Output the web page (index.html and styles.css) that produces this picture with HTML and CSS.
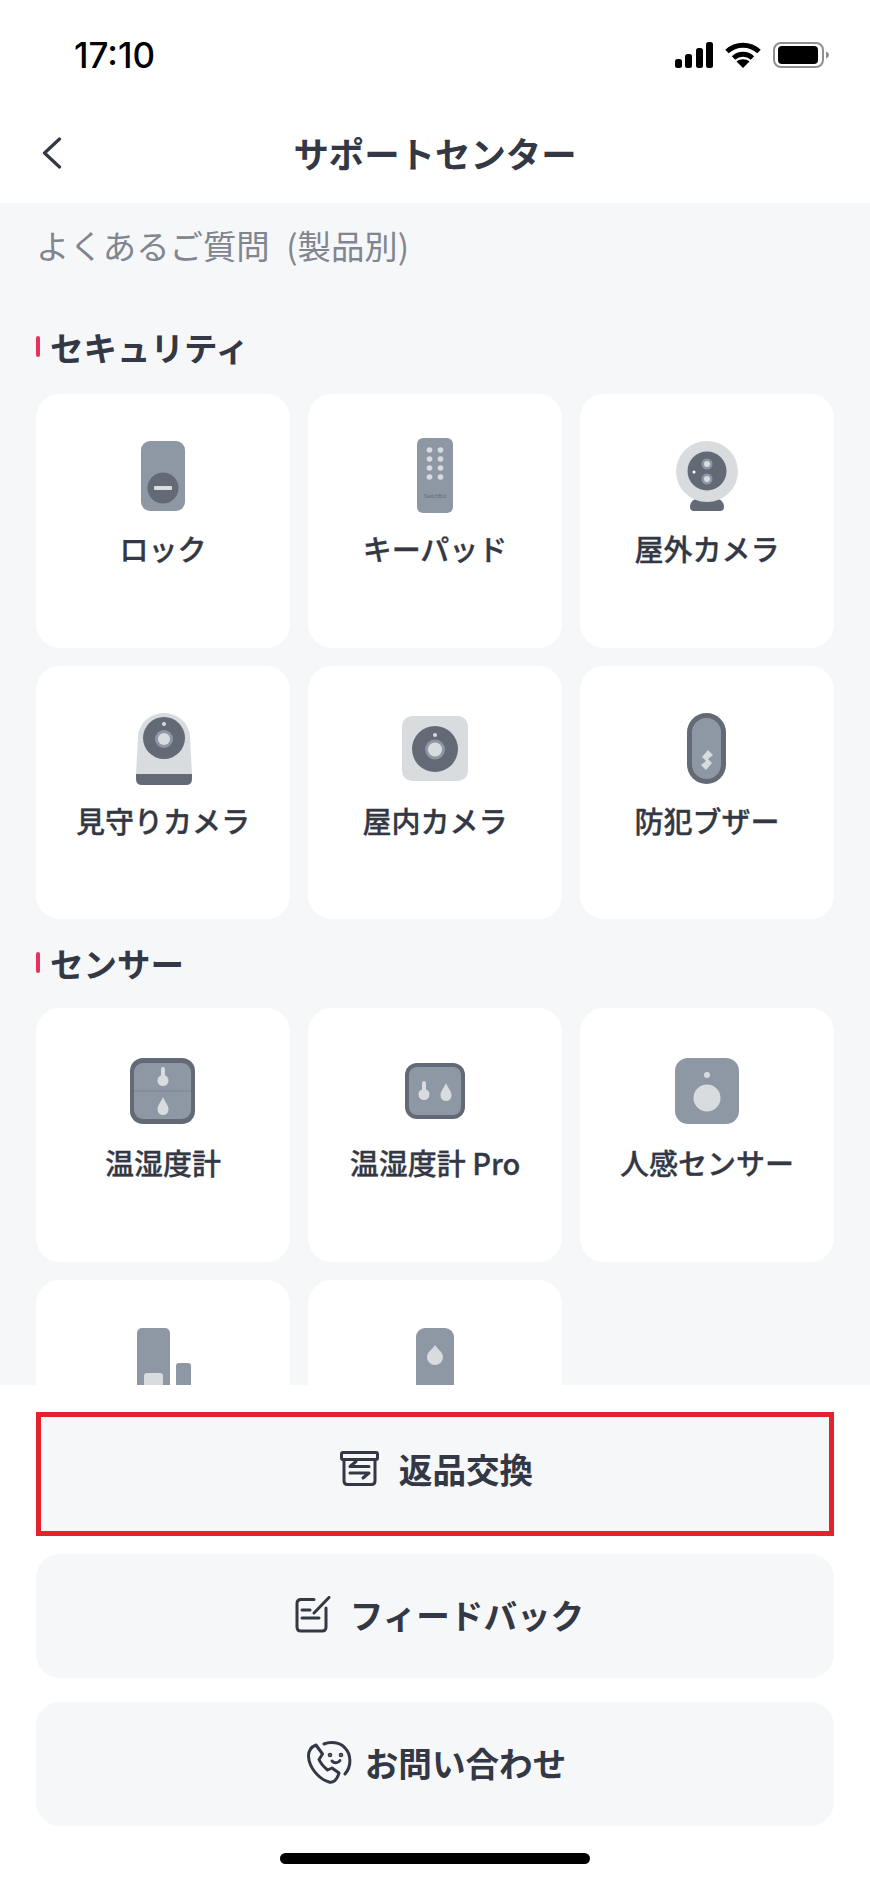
FILE: index.html
```html
<!DOCTYPE html>
<html lang="ja">

<head>
    <meta charset="UTF-8">
    <meta name="viewport" content="width=device-width, initial-scale=1.0">
    <title>サポートセンター</title>
    <link rel="stylesheet" href="styles.css">
</head>

<body>
    <div class="status-bar">
        <span class="time">17:10</span>
        <div class="status-icons">
            <svg width="38" height="26" viewBox="0 0 38 26" fill="#000">
                <rect x="0" y="17" width="7" height="9" rx="2.5"/>
                <rect x="10" y="12" width="7" height="14" rx="2.5"/>
                <rect x="21" y="6" width="7" height="20" rx="2.5"/>
                <rect x="31" y="0" width="7" height="26" rx="2.5"/>
            </svg>
            <svg width="36" height="26" viewBox="0 0 36 26" fill="none" stroke="#000" stroke-width="5">
                <path d="M2 9.5C11 1 25 1 34 9.5"/>
                <path d="M8.5 16C14 11 22 11 27.5 16"/>
                <path d="M18 26L11.5 19.5C15 16.5 21 16.5 24.5 19.5Z" fill="#000" stroke="none"/>
            </svg>
            <svg width="57" height="26" viewBox="0 0 57 26">
                <rect x="1" y="1" width="49" height="24" rx="7" fill="none" stroke="#8f8f8f" stroke-width="2"/>
                <rect x="5" y="4" width="40" height="18" rx="4" fill="#000"/>
                <path d="M53 9.5C55 10.5 56 11.5 56 13C56 14.5 55 15.5 53 16.5Z" fill="#8f8f8f"/>
            </svg>
        </div>
    </div>

    <header class="header">
        <svg class="back" width="20" height="32" viewBox="0 0 20 32" fill="none" stroke="#333844" stroke-width="3.2" stroke-linecap="round" stroke-linejoin="round">
            <path d="M17.5 2L2.5 16L17.5 30"/>
        </svg>
        <h1 class="title">サポートセンター</h1>
    </header>

    <main class="content">
        <p class="lead">よくあるご質問 (製品別)</p>

        <h2 class="section-title">セキュリティ</h2>
        <div class="grid">
            <div class="card">
                <svg class="card-icon" viewBox="0 0 80 80">
                    <rect x="18" y="4" width="44" height="70" rx="9" fill="#8e98a5"/>
                    <circle cx="40" cy="51" r="15.5" fill="#636a76"/>
                    <rect x="31" y="49" width="18" height="4" rx="1" fill="#d9dcdf"/>
                </svg>
                <span class="card-label">ロック</span>
            </div>
            <div class="card">
                <svg class="card-icon" viewBox="0 0 80 80">
                    <rect x="22" y="1" width="36" height="75" rx="6" fill="#8e98a5"/>
                    <g fill="#d9dcdf">
                        <circle cx="34.5" cy="13" r="2.8"/><circle cx="45.5" cy="13" r="2.8"/>
                        <circle cx="34.5" cy="22" r="2.8"/><circle cx="45.5" cy="22" r="2.8"/>
                        <circle cx="34.5" cy="31" r="2.8"/><circle cx="45.5" cy="31" r="2.8"/>
                        <circle cx="34.5" cy="40" r="2.8"/><circle cx="45.5" cy="40" r="2.8"/>
                    </g>
                    <text class="brand" x="40" y="61">SwitchBot</text>
                </svg>
                <span class="card-label">キーパッド</span>
            </div>
            <div class="card">
                <svg class="card-icon" viewBox="0 0 80 80">
                    <path d="M23 70C23 66 25 64 28 62H52C55 64 57 66 57 70Q57 74 53 74H27Q23 74 23 70Z" fill="#636a76"/>
                    <ellipse cx="40" cy="34.5" rx="31" ry="30.5" fill="#d9dcdf"/>
                    <circle cx="40" cy="34" r="19.5" fill="#636a76"/>
                    <circle cx="40" cy="27" r="5.5" fill="#8e98a5"/>
                    <circle cx="40" cy="27" r="3" fill="#d9dcdf"/>
                    <circle cx="40" cy="42" r="5.5" fill="#8e98a5"/>
                    <circle cx="40" cy="42" r="3" fill="#d9dcdf"/>
                    <circle cx="27" cy="35" r="1.5" fill="#fff"/>
                </svg>
                <span class="card-label">屋外カメラ</span>
            </div>
            <div class="card">
                <svg class="card-icon" viewBox="0 0 80 80">
                    <path d="M13 65L15 28C16 13 28 4 41 4C54 4 66 13 67 28L69 65Z" fill="#d9dcdf"/>
                    <path d="M13 65H69V70Q69 76 63 76H19Q13 76 13 70Z" fill="#636a76"/>
                    <circle cx="41" cy="29" r="21" fill="#636a76"/>
                    <circle cx="41" cy="30" r="9" fill="#8e98a5"/>
                    <circle cx="41" cy="30" r="6" fill="#d9dcdf"/>
                    <circle cx="41" cy="15" r="2" fill="#d9dcdf"/>
                </svg>
                <span class="card-label">見守りカメラ</span>
            </div>
            <div class="card">
                <svg class="card-icon" viewBox="0 0 80 80">
                    <rect x="7" y="7" width="66" height="65" rx="10" fill="#d9dcdf"/>
                    <circle cx="40" cy="40" r="23" fill="#636a76"/>
                    <circle cx="40" cy="40.5" r="10" fill="#8e98a5"/>
                    <circle cx="40" cy="40.5" r="7" fill="#d9dcdf"/>
                    <circle cx="40" cy="26" r="2" fill="#d9dcdf"/>
                </svg>
                <span class="card-label">屋内カメラ</span>
            </div>
            <div class="card">
                <svg class="card-icon" viewBox="0 0 80 80">
                    <rect x="20" y="4" width="39" height="71" rx="19.5" fill="#636a76"/>
                    <rect x="25" y="9" width="29" height="61" rx="14.5" fill="#8e98a5"/>
                    <path d="M41 41L46 46L41 50L45 54L39 61L34 56L39 52L35 48Z" fill="#d9dcdf"/>
                </svg>
                <span class="card-label">防犯ブザー</span>
            </div>
        </div>

        <h2 class="section-title">センサー</h2>
        <div class="grid">
            <div class="card">
                <svg class="card-icon" viewBox="0 0 80 80">
                    <rect x="7" y="7" width="65" height="66" rx="13" fill="#636a76"/>
                    <rect x="11" y="12" width="57" height="56" rx="9" fill="#8e98a5"/>
                    <rect x="11" y="39.5" width="57" height="1" fill="#7a8390"/>
                    <rect x="38" y="16" width="4" height="14" rx="2" fill="#d9dcdf"/>
                    <circle cx="40" cy="29.5" r="5.5" fill="#d9dcdf"/>
                    <path d="M40 46C42 51 45.5 54 45.5 58.5A5.5 5.5 0 0 1 34.5 58.5C34.5 54 38 51 40 46Z" fill="#d9dcdf"/>
                </svg>
                <span class="card-label">温湿度計</span>
            </div>
            <div class="card">
                <svg class="card-icon" viewBox="0 0 80 80">
                    <rect x="10" y="12" width="60" height="56" rx="12" fill="#636a76"/>
                    <rect x="14" y="16" width="52" height="48" rx="8" fill="#8e98a5"/>
                    <rect x="27" y="30" width="4" height="14" rx="2" fill="#d9dcdf"/>
                    <circle cx="29" cy="43.5" r="5.5" fill="#d9dcdf"/>
                    <path d="M51 32C53 37 56.5 40 56.5 44.5A5.5 5.5 0 0 1 45.5 44.5C45.5 40 49 37 51 32Z" fill="#d9dcdf"/>
                </svg>
                <span class="card-label">温湿度計 Pro</span>
            </div>
            <div class="card">
                <svg class="card-icon" viewBox="0 0 80 80">
                    <rect x="8" y="7" width="64" height="66" rx="13" fill="#8e98a5"/>
                    <circle cx="40" cy="24" r="3" fill="#d9dcdf"/>
                    <circle cx="40" cy="47" r="13.5" fill="#d9dcdf"/>
                </svg>
                <span class="card-label">人感センサー</span>
            </div>
            <div class="card">
                <svg class="card-icon" viewBox="0 0 80 80">
                    <rect x="14" y="5" width="33" height="70" rx="5" fill="#8e98a5"/>
                    <rect x="21" y="50" width="19" height="18" rx="3" fill="#d9dcdf"/>
                    <rect x="53" y="40" width="15" height="35" rx="3" fill="#8e98a5"/>
                </svg>
            </div>
            <div class="card">
                <svg class="card-icon" viewBox="0 0 80 80">
                    <rect x="21" y="5" width="38" height="70" rx="9" fill="#8e98a5"/>
                    <path d="M40 22C43 27 48 29 48 34A8 8 0 0 1 32 34C32 29 37 27 40 22Z" fill="#d9dcdf"/>
                </svg>
            </div>
        </div>
    </main>

    <div class="actions">
        <button class="action action-returns">
            <svg width="39" height="35" viewBox="0 0 39 35" fill="none" stroke="#333844" stroke-width="3" stroke-linecap="round" stroke-linejoin="round">
                <rect x="1.5" y="1.5" width="36" height="7" rx="1.5"/>
                <path d="M4 8.5V30Q4 33.5 7.5 33.5H31.5Q35 33.5 35 30V8.5"/>
                <path d="M16 10.5L10 15.5H29"/>
                <path d="M10 22H29L23 27"/>
            </svg>
            返品交換
        </button>
        <button class="action action-feedback">
            <svg width="36" height="37" viewBox="0 0 36 37" fill="none" stroke="#333844" stroke-width="3" stroke-linecap="round" stroke-linejoin="round">
                <path d="M19 3.5H6Q2 3.5 2 7.5V31Q2 35 6 35H27Q31 35 31 31V12"/>
                <path d="M19 17L34 1.5"/>
                <path d="M7 14H15"/>
                <path d="M7 22H24"/>
            </svg>
            フィードバック
        </button>
        <button class="action action-contact">
            <svg width="46" height="43" viewBox="0 0 46 43" fill="none" stroke="#333844" stroke-width="3" stroke-linecap="round" stroke-linejoin="round">
                <path d="M9 4C4 6 1.5 10 1.5 15C2 27 12 38 22 41C26 42 30 39 32 32L25 27L20.5 29C17 26 14 23 12 18.5L15.5 13Z"/>
                <path d="M17 3C23 0.5 33 1 38 7C44 13 45 25 38 33"/>
                <path d="M25 20C27 22.5 31 22.5 33 19.5"/>
                <circle cx="23" cy="14" r="0.8" fill="#333844"/>
                <circle cx="34" cy="14" r="0.8" fill="#333844"/>
            </svg>
            お問い合わせ
        </button>
        <div class="home-indicator"></div>
    </div>
</body>

</html>
```

FILE: styles.css
```css
/* General Reset */
* {
    margin: 0;
    padding: 0;
    box-sizing: border-box;
}

body {
    font-family: "Noto Sans CJK JP", "Noto Sans", sans-serif;
    display: flex;
    flex-direction: column;
    height: 1882px;
    overflow: hidden;
    background: #fff;
    color: #333844;
}

.status-bar {
    height: 110px;
    padding: 0 40px 0 74px;
    display: flex;
    justify-content: space-between;
    align-items: center;
    flex-shrink: 0;
}

.time {
    font-family: Inter, sans-serif;
    font-size: 35px;
    font-weight: 500;
    color: #000;
}

.status-icons {
    display: flex;
    align-items: center;
    gap: 12px;
}

.header {
    height: 93px;
    padding: 0 42px 7px;
    display: grid;
    grid-template-columns: 1fr auto 1fr;
    align-items: center;
    flex-shrink: 0;
}

.title {
    font-size: 35.4px;
    font-weight: 700;
    line-height: 44px;
}

.content {
    flex: 1;
    min-height: 0;
    overflow: hidden;
    background: #f6f7f9;
    padding: 20px 36px 0;
}

.lead {
    font-size: 33.4px;
    line-height: 44px;
    word-spacing: 9px;
    color: #80858f;
    margin-bottom: 60px;
}

.section-title {
    font-size: 33.5px;
    font-weight: 700;
    line-height: 40px;
    margin: 24px 0 25px;
    padding-left: 14px;
    position: relative;
}

.lead + .section-title {
    margin-bottom: 27px;
}

.section-title::before {
    content: "";
    position: absolute;
    left: 0;
    top: 9px;
    width: 4px;
    height: 21px;
    border-radius: 2px;
    background: #e8325d;
}

.grid {
    display: grid;
    grid-template-columns: repeat(3, 254px);
    grid-auto-rows: 253.5px;
    gap: 18px;
}

.card {
    background: #fff;
    border-radius: 24px;
    padding-top: 43px;
    display: flex;
    flex-direction: column;
    align-items: center;
}

.card-icon {
    width: 80px;
    height: 80px;
    margin-bottom: 11px;
}

.card-label {
    font-size: 29px;
    font-weight: 500;
    -webkit-text-stroke: 0.3px #333844;
    line-height: 40px;
}

.brand {
    font-family: "Liberation Sans", sans-serif;
    font-size: 5px;
    text-anchor: middle;
    fill: #636a76;
}

.actions {
    height: 497px;
    flex-shrink: 0;
    padding: 27px 36px 0;
    display: flex;
    flex-direction: column;
    background: #fff;
}

.action {
    height: 124px;
    flex-shrink: 0;
    margin-bottom: 24px;
    padding-bottom: 3px;
    border: none;
    border-radius: 24px;
    background: #f6f7f9;
    display: flex;
    justify-content: center;
    align-items: center;
    gap: 20px;
    font-family: inherit;
    font-size: 33.6px;
    font-weight: 700;
    color: #333844;
}

.action-returns {
    margin-bottom: 18px;
    padding: 0 0 12px 3px;
    border: 5px solid #e3222b;
    border-radius: 0;
}

.action-feedback {
    gap: 19px;
    padding-left: 9px;
}

.action-contact {
    gap: 12px;
    padding-left: 3px;
    margin-bottom: 27px;
}

.home-indicator {
    width: 310px;
    height: 11px;
    margin: 0 auto;
    border-radius: 6px;
    background: #000;
}
```
